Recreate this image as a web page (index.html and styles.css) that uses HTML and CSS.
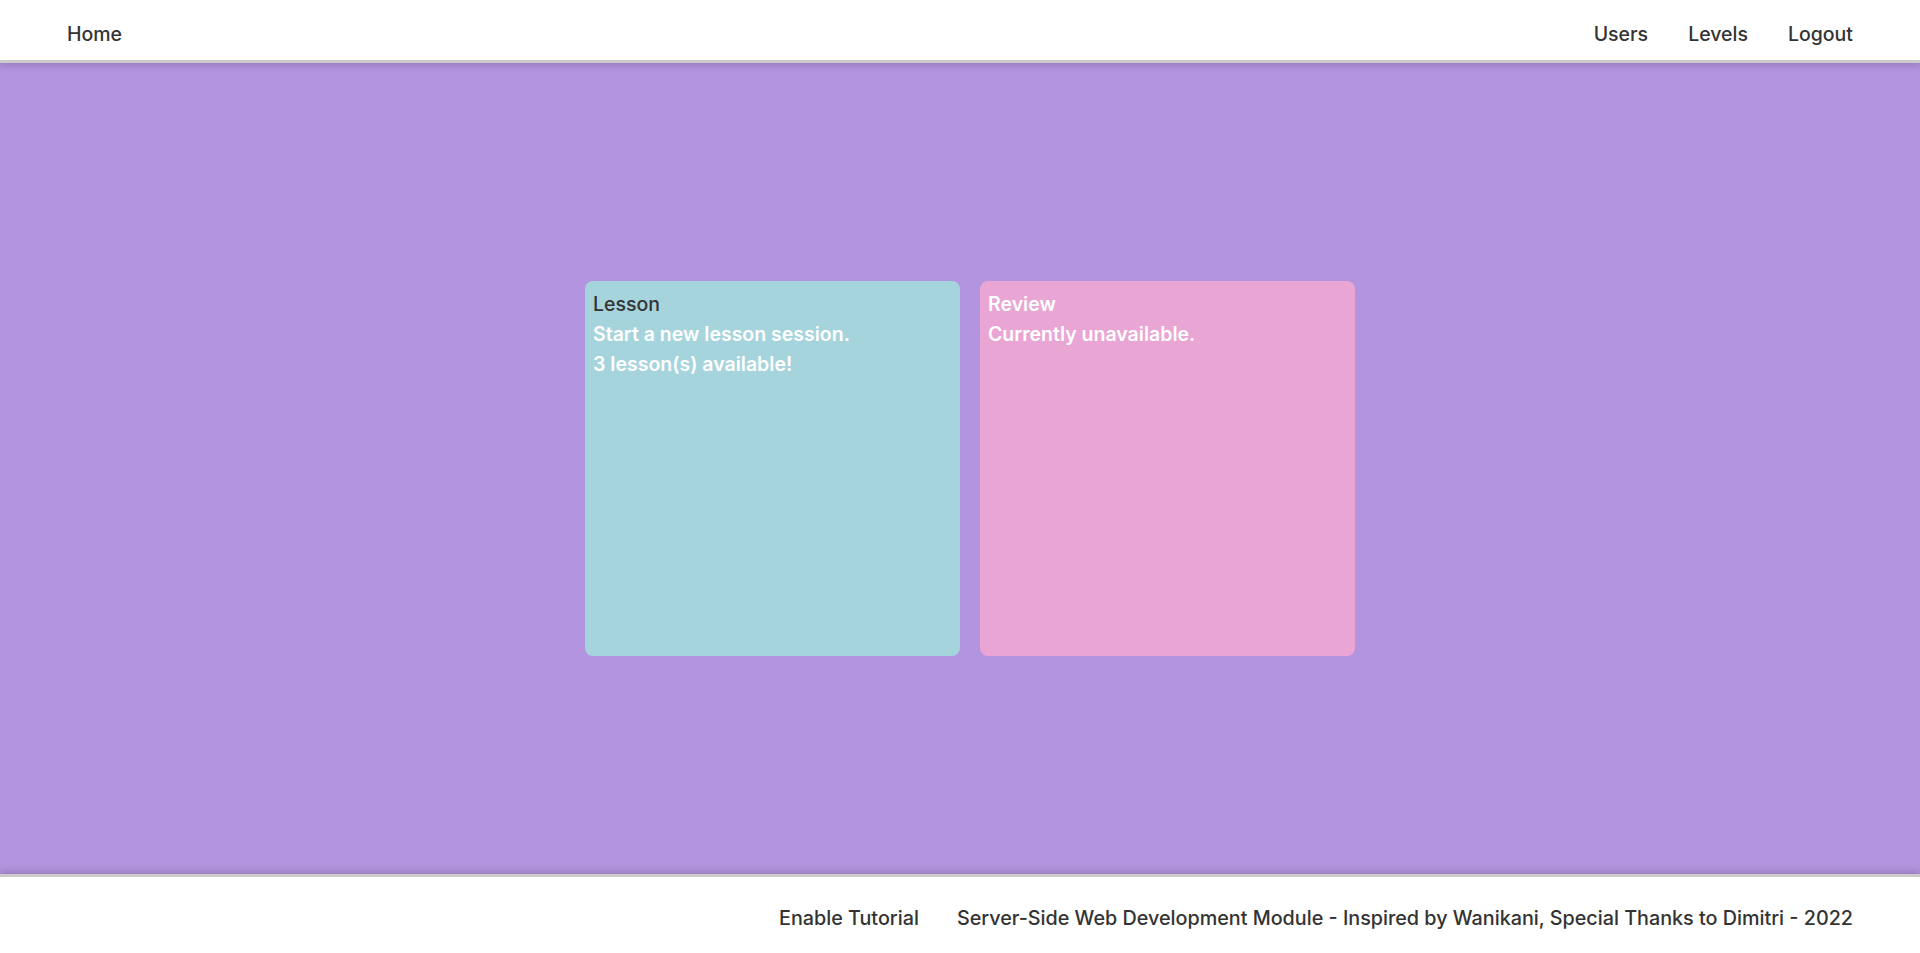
FILE: index.html
```html
<!DOCTYPE html>
<html lang="en">
<head>
    <meta charset="UTF-8">
    <meta name="viewport" content="width=device-width, initial-scale=1.0">
    <title>Home</title>
    <link rel="stylesheet" href="styles.css">
</head>
<body>
    <header class="topbar">
        <a href="#" class="nav-link">Home</a>
        <nav class="nav-right">
            <a href="#" class="nav-link">Users</a>
            <a href="#" class="nav-link">Levels</a>
            <a href="#" class="nav-link">Logout</a>
        </nav>
    </header>

    <main class="dashboard">
        <div class="card card-lesson">
            <p class="card-title">Lesson</p>
            <p class="card-text">Start a new lesson session.</p>
            <p class="card-text">3 lesson(s) available!</p>
        </div>
        <div class="card card-review">
            <p class="card-title light">Review</p>
            <p class="card-text">Currently unavailable.</p>
        </div>
    </main>

    <footer class="bottombar">
        <a href="#" class="footer-link">Enable Tutorial</a>
        <span class="footer-text">Server-Side Web Development Module - Inspired by Wanikani, Special Thanks to Dimitri - 2022</span>
    </footer>
</body>
</html>
```

FILE: styles.css
```css
/* Reset */
* {
    margin: 0;
    padding: 0;
    box-sizing: border-box;
}

body {
    font-family: 'Inter', 'Roboto', sans-serif;
    font-weight: 500;
    color: #333;
    background-color: #b294df;
    min-height: 100vh;
    display: flex;
    flex-direction: column;
}

/* Header */
.topbar {
    height: 63px;
    background-color: #ffffff;
    border-bottom: 3px solid #cbcbcb;
    box-shadow: 0 2px 8px rgba(0, 0, 0, 0.18);
    display: flex;
    align-items: center;
    justify-content: space-between;
    padding: 8px 47px 0 47px;
    position: relative;
    z-index: 2;
}

.nav-right {
    display: flex;
}

.nav-link {
    color: #333;
    text-decoration: none;
    font-size: 19.5px;
    padding: 0 20px;
}

/* Cards */
.dashboard {
    flex: 1;
    display: flex;
    justify-content: center;
    align-items: center;
    gap: 20px;
    padding-left: 20px;
}

.card {
    width: 375px;
    height: 375px;
    border-radius: 8px;
    padding: 8px 8px;
    color: #ffffff;
    font-size: 19.5px;
    line-height: 30px;
}

.card-lesson {
    background-color: #a6d4dd;
}

.card-review {
    background-color: #e9a5d4;
}

.card-text {
    font-weight: 600;
}

.card-title {
    color: #333;
}

.card-title.light {
    color: #ffffff;
    font-weight: 600;
}

/* Footer */
.bottombar {
    height: 79px;
    background-color: #ffffff;
    border-top: 3px solid #cbcbcb;
    box-shadow: 0 -2px 8px rgba(0, 0, 0, 0.18);
    display: flex;
    align-items: center;
    justify-content: flex-end;
    padding: 6px 67px 0 0;
    font-size: 19.75px;
    position: relative;
    z-index: 2;
}

.footer-link {
    color: #333;
    text-decoration: none;
    margin-right: 38px;
}
```
